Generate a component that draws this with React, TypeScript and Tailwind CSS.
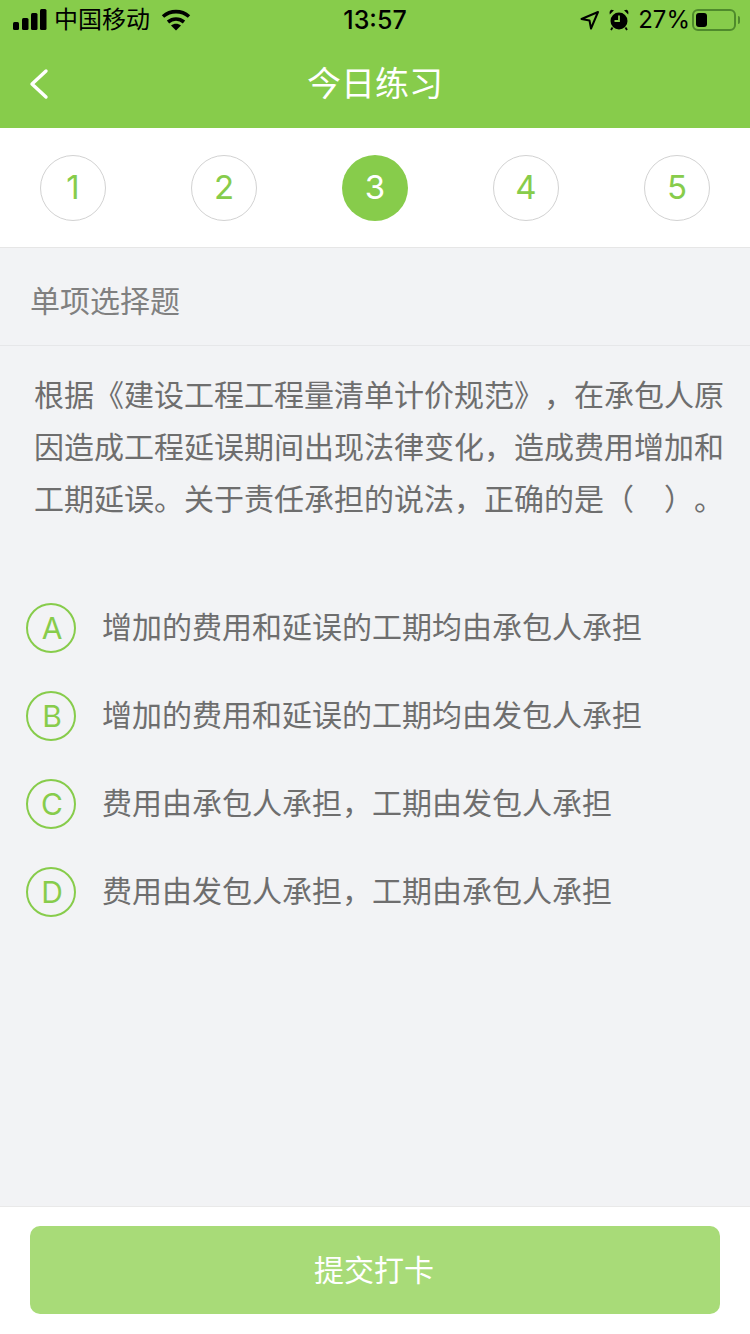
import React from 'react';

const font = "font-['Inter','Noto_Sans_CJK_SC',sans-serif]";

const steps = [1, 2, 3, 4, 5];

const options = [
  { key: 'A', text: '增加的费用和延误的工期均由承包人承担' },
  { key: 'B', text: '增加的费用和延误的工期均由发包人承担' },
  { key: 'C', text: '费用由承包人承担，工期由发包人承担' },
  { key: 'D', text: '费用由发包人承担，工期由承包人承担' },
];

const StatusBar = () => (
  <div className="flex h-10 items-center justify-between pl-[13px] pr-[11px] text-black">
    <div className="flex w-[250px] items-center">
      <svg width="34" height="22" viewBox="0 0 34 22" fill="#000">
        <rect x="0" y="13" width="6" height="8" rx="1.5" />
        <rect x="9" y="9" width="6.5" height="12" rx="1.5" />
        <rect x="18" y="4" width="6.5" height="17" rx="1.5" />
        <rect x="27" y="0" width="6.5" height="21" rx="1.5" />
      </svg>
      <span className="ml-[7px] text-[24px] leading-none">中国移动</span>
      <svg className="ml-[11px]" width="30" height="22" viewBox="0 0 30 22" fill="none" stroke="#000" strokeWidth="3.6">
        <path d="M2 7.5C9.5 1 20.5 1 28 7.5" />
        <path d="M7 13C11.8 9 18.2 9 23 13" />
        <path d="M15 21.5L10 16.5C13 14.3 17 14.3 20 16.5Z" fill="#000" stroke="none" />
      </svg>
    </div>
    <span className="-ml-[2px] text-[25px] font-medium leading-none">13:57</span>
    <div className="flex w-[250px] items-center justify-end">
      <svg width="20" height="20" viewBox="0 0 20 20" fill="none" stroke="#000" strokeWidth="2" strokeLinejoin="round">
        <path d="M1.5 9L18 2L11 18.5L9.5 10.5Z" />
      </svg>
      <svg className="ml-[9px]" width="20" height="22" viewBox="0 0 20 22">
        <circle cx="10" cy="12" r="8.5" fill="#000" />
        <path d="M10 6.5V12H5.5" fill="none" stroke="#87cc4b" strokeWidth="1.8" />
        <path d="M0.8 5.5L5 1.2L2.2 0.8Q0 1.8 0.8 5.5ZM19.2 5.5L15 1.2L17.8 0.8Q20 1.8 19.2 5.5Z" fill="#000" />
        <path d="M3.5 18.5L2 21M16.5 18.5L18 21" stroke="#000" strokeWidth="1.8" />
      </svg>
      <span className="ml-[9px] text-[24px] leading-none">27%</span>
      <div className="relative ml-[2px] mr-[3px] flex h-[22px] w-[44px] items-center rounded-[6px] border-2 border-[#4f8a2c] p-[2px]">
        <div className="h-[14px] w-[11px] rounded-[3px] bg-black" />
        <div className="absolute -right-[6px] top-[5px] h-[8px] w-[2px] rounded-r bg-[#4f8a2c]" />
      </div>
    </div>
  </div>
);

export default function App() {
  return (
    <div className={`flex h-[1334px] w-[750px] flex-col overflow-hidden bg-[#f2f3f5] [text-spacing-trim:space-all] ${font}`}>
      <div className="h-32 bg-[#87cc4b]">
        <StatusBar />
        <div className="relative flex h-[88px] items-center justify-center pb-[1px]">
          <svg className="absolute left-[28px] top-[28px]" width="22" height="32" viewBox="0 0 22 32" fill="none" stroke="#fff" strokeWidth="3.4" strokeLinecap="round" strokeLinejoin="round">
            <path d="M18 3L4 16L18 29" />
          </svg>
          <span className="text-[34px] leading-none text-white">今日练习</span>
        </div>
      </div>

      <div className="flex h-[120px] items-center justify-between border-b border-[#e6e6e6] bg-white px-10 pt-[1px]">
        {steps.map((n) =>
          n === 3 ? (
            <div key={n} className="flex h-[66px] w-[66px] items-center justify-center rounded-full bg-[#87cc4b] text-[33px] text-white">
              {n}
            </div>
          ) : (
            <div key={n} className="flex h-[66px] w-[66px] items-center justify-center rounded-full border border-[#d2d2d2] text-[33px] text-[#87cc4b]">
              {n}
            </div>
          ),
        )}
      </div>

      <div className="flex h-[98px] items-center border-b border-[#e6e7e9] pl-[30px] pt-[10px] text-[30px] text-[#808080]">
        单项选择题
      </div>

      <p className="mt-[23px] pl-[34px] pr-[20px] text-[30px] leading-[52px] text-[#6e6e6e]">
        根据《建设工程工程量清单计价规范》，在承包人原因造成工程延误期间出现法律变化，造成费用增加和工期延误。关于责任承担的说法，正确的是（　）。
      </p>

      <div className="mt-[78px] flex flex-col gap-[38px] pl-[26px]">
        {options.map((o) => (
          <div key={o.key} className="flex h-[50px] items-center">
            <div className="flex h-[50px] w-[50px] items-center justify-center rounded-full border-2 border-[#87cc4b] pl-[2px] text-[30px] text-[#87cc4b]">
              {o.key}
            </div>
            <span className="mb-[2px] ml-[26px] text-[30px] text-[#6e6e6e]">{o.text}</span>
          </div>
        ))}
      </div>

      <div className="mt-auto flex h-[128px] justify-center border-t border-[#e9e9e9] bg-white pt-[19px]">
        <button className="h-[88px] w-[690px] rounded-[10px] bg-[#a8db78] pr-[2px] text-[30px] text-white">提交打卡</button>
      </div>
    </div>
  );
}
